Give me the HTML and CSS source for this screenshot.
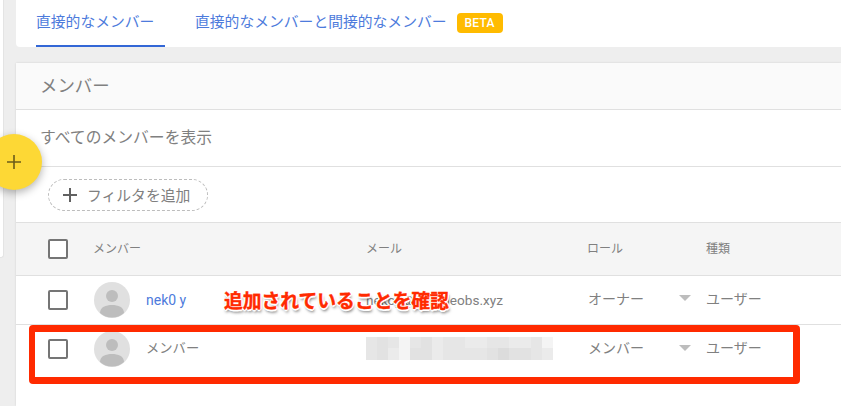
FILE: index.html
```html
<!DOCTYPE html>
<html lang="ja">
<head>
<meta charset="utf-8">
<title>メンバー</title>
<link rel="stylesheet" href="styles.css">
</head>
<body>
<div class="page">
  <aside class="rail"></aside>
  <main class="main">
    <nav class="tabs">
      <a class="tab tab-active">直接的なメンバー</a>
      <a class="tab tab-second">直接的なメンバーと間接的なメンバー</a>
      <span class="badge">BETA</span>
    </nav>
    <section class="card">
      <h2 class="card-title">メンバー</h2>
      <div class="view-row">すべてのメンバーを表示</div>
      <div class="filter-row">
        <button class="chip">
          <svg class="chip-plus" viewBox="0 0 14 14"><path d="M7 0v14M0 7h14"/></svg>
          <span>フィルタを追加</span>
        </button>
      </div>
      <div class="grid grid-head">
        <span class="checkbox"></span>
        <span class="label label-first">メンバー</span>
        <span class="label">メール</span>
        <span class="label">ロール</span>
        <span class="label">種類</span>
      </div>
      <div class="grid grid-row">
        <span class="checkbox"></span>
        <div class="person">
          <svg class="avatar" viewBox="0 0 36 36"><circle cx="18" cy="18" r="18" fill="#e0e0e0"/><circle cx="18" cy="14" r="6" fill="#bdbdbd"/><path d="M6 31c0-6 6-8 12-8s12 2 12 8a18 18 0 0 1-24 0z" fill="#bdbdbd"/></svg>
          <a class="name-link">nek0 y</a>
        </div>
        <span class="mail">nekoy@myvideobs.xyz</span>
        <div class="role"><span class="cell-text">オーナー</span><i class="caret"></i></div>
        <span class="cell-text">ユーザー</span>
      </div>
      <div class="grid grid-row grid-row-last">
        <span class="checkbox"></span>
        <div class="person">
          <svg class="avatar" viewBox="0 0 36 36"><circle cx="18" cy="18" r="18" fill="#e0e0e0"/><circle cx="18" cy="14" r="6" fill="#bdbdbd"/><path d="M6 31c0-6 6-8 12-8s12 2 12 8a18 18 0 0 1-24 0z" fill="#bdbdbd"/></svg>
          <span class="cell-name">メンバー</span>
        </div>
        <div class="mosaic">
          <i class="s2"></i><i class="s3"></i><i class="s2"></i><i class="s0"></i><i class="s2"></i><i class="s3"></i><i class="s1"></i><i class="s2"></i><i class="s2"></i><i class="s1"></i><i class="s1"></i><i class="s2"></i><i class="s2"></i><i class="s1"></i><i class="s1"></i><i class="s2"></i><i class="s0"></i>
          <i class="s2"></i><i class="s3"></i><i class="s1"></i><i class="s0"></i><i class="s3"></i><i class="s3"></i><i class="s1"></i><i class="s2"></i><i class="s2"></i><i class="s2"></i><i class="s2"></i><i class="s3"></i><i class="s4"></i><i class="s3"></i><i class="s3"></i><i class="s2"></i><i class="s1"></i>
        </div>
        <div class="role"><span class="cell-text">メンバー</span><i class="caret"></i></div>
        <span class="cell-text">ユーザー</span>
      </div>
    </section>
  </main>
</div>
<button class="fab" aria-label="追加"><svg viewBox="0 0 14 14"><path d="M7 0v14M0 7h14"/></svg></button>
<div class="note">追加されていることを確認</div>
<div class="highlight"></div>
</body>
</html>
```
FILE: styles.css
```css
* { box-sizing: border-box; }
html, body { margin: 0; height: 100%; }
body {
  position: relative;
  width: 841px;
  height: 406px;
  overflow: hidden;
  background: #eeeeee;
  color: #808080;
  font-family: Roboto, "Noto Sans CJK JP", sans-serif;
}
.page { display: flex; height: 406px; align-items: flex-start; }
.rail {
  flex: 0 0 4px;
  height: 258px;
  background: #fff;
  border-right: 1px solid #e4e4e4;
  border-bottom: 1px solid #e4e4e4;
  border-bottom-right-radius: 3px;
}
.main { flex: 1; margin-left: 12px; min-width: 0; }

.tabs {
  display: flex;
  align-items: flex-start;
  height: 47px;
  padding-left: 20px;
  background: #fff;
  border-bottom-left-radius: 4px;
}
.tab {
  display: block;
  height: 47px;
  padding-top: 11px;
  font-size: 14.8px;
  line-height: 22px;
  color: #4d7bdc;
}
.tab-active {
  width: 129px;
  border-bottom: 2px solid #3367d6;
}
.tab-second { margin-left: 30px; }
.badge {
  margin: 13px 0 0 10px;
  width: 46px;
  height: 20px;
  background: #ffbb00;
  border-radius: 4px;
  color: #fff;
  font-size: 12px;
  font-weight: 500;
  line-height: 20px;
  text-align: center;
  letter-spacing: .2px;
}

.card {
  margin-top: 16px;
  background: #fff;
  height: 343px;
  box-shadow: 0 0 2px rgba(0,0,0,.12);
}
.card-title {
  margin: 0;
  height: 47px;
  padding: 0 0 0 24px;
  background: #fafafa;
  border-bottom: 1px solid #e0e0e0;
  font-size: 17.4px;
  font-weight: 400;
  line-height: 46px;
}
.view-row {
  height: 57px;
  padding: 14px 0 0 24px;
  border-bottom: 1px solid #e0e0e0;
  font-size: 15.8px;
  line-height: 27px;
}
.filter-row { height: 55px; padding: 12px 0 0 32px; }
.chip {
  display: flex;
  align-items: center;
  width: 160px;
  height: 32px;
  padding: 0 0 0 14px;
  background: #fff;
  border: 1px dashed #bdbdbd;
  border-radius: 16px;
  color: #808080;
  font: inherit;
  font-size: 14.8px;
}
.chip span { margin: 0 0 2px 10px; }
.chip-plus { width: 14px; height: 14px; }
.chip-plus path { stroke: #616161; stroke-width: 2; fill: none; }

.grid {
  display: grid;
  grid-template-columns: 46px 272px 221px 119px 1fr;
}
.grid-head {
  height: 54px;
  align-items: center;
  background: #f5f5f5;
  border-top: 1px solid #e0e0e0;
  border-bottom: 1px solid #e0e0e0;
  padding-left: 32px;
  font-size: 12px;
}
.label { margin-top: -3px; }
.label-first { margin-left: -1px; }
.grid-row {
  height: 49px;
  align-items: center;
  padding-left: 32px;
  border-bottom: 1px solid #e0e0e0;
  font-size: 14px;
}
.grid-row-last { border-bottom: 0; margin-top: -1px; }
.checkbox {
  display: block;
  width: 20px;
  height: 20px;
  background: #fff;
  border: 2px solid #757575;
  border-radius: 2px;
}
.person { display: flex; align-items: center; gap: 16px; }
.avatar { width: 36px; height: 36px; display: block; }
.name-link { color: #4d7bdc; font-size: 14px; margin-bottom: 1px; }
.mail { font-size: 13.6px; }
.cell-text { margin-bottom: 5px; }
.grid-row-last .cell-text { margin-bottom: 3px; }
.cell-name { font-size: 13.3px; margin-bottom: 3px; }
.role { display: flex; align-items: center; justify-content: space-between; padding: 0 15px 0 1px; }
.caret {
  display: block;
  width: 0;
  height: 0;
  border-left: 6px solid transparent;
  border-right: 6px solid transparent;
  border-top: 6px solid #bdbdbd;
  margin-bottom: 5px;
}
.grid-row-last .caret { margin-bottom: 2px; }
.mosaic {
  display: grid;
  grid-template-columns: repeat(17, 11px);
  grid-auto-rows: 11.5px;
  width: 187px;
  margin-bottom: 1px;
}
.s0 { background: #f4f4f4; }
.s1 { background: #ebebeb; }
.s2 { background: #e6e6e6; }
.s3 { background: #e2e2e2; }
.s4 { background: #dcdcdc; }

.fab {
  position: absolute;
  left: -14px;
  top: 134px;
  width: 56px;
  height: 56px;
  padding: 0;
  border: 0;
  border-radius: 50%;
  background: #fdd835;
  box-shadow: 0 3px 8px rgba(0,0,0,.3);
  display: flex;
  align-items: center;
  justify-content: center;
}
.fab svg { width: 14px; height: 14px; }
.fab path { stroke: #6b5c1a; stroke-width: 1.6; fill: none; }

.note {
  position: absolute;
  left: 224px;
  top: 286px;
  font-family: "Noto Sans CJK JP", sans-serif;
  font-size: 18.8px;
  font-weight: 700;
  line-height: 28px;
  color: #ff2a00;
  -webkit-text-stroke: .4px #ff2a00;
  white-space: nowrap;
  text-shadow: 1.5px 0 0 #fff, -1.5px 0 0 #fff, 0 1.5px 0 #fff, 0 -1.5px 0 #fff, 1px 1px 0 #fff, -1px 1px 0 #fff, 1px -1px 0 #fff, -1px -1px 0 #fff, 1px 3px 3px rgba(0,0,0,.55);
}
.highlight {
  position: absolute;
  left: 29px;
  top: 325px;
  width: 771px;
  height: 59px;
  border: 7px solid #ff2a00;
  border-left-width: 6px;
  border-radius: 4px;
}
```
